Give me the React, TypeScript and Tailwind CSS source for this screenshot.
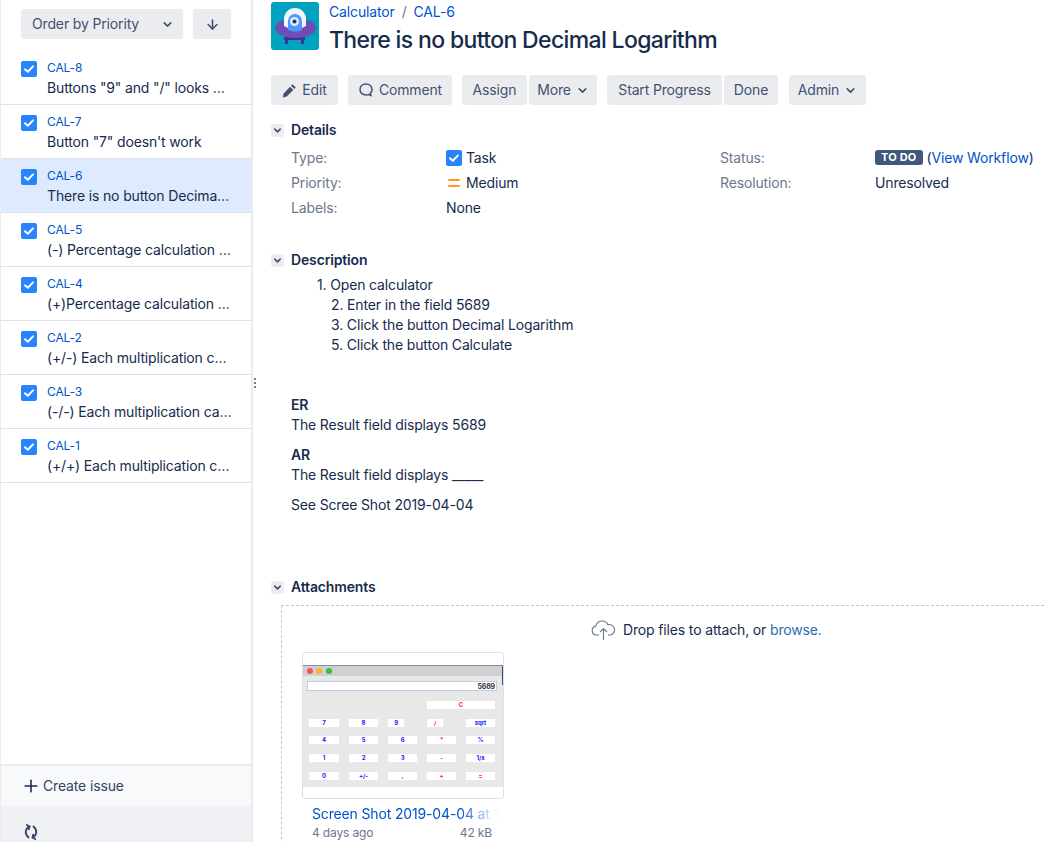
import { ArrowDown, ChevronDown, Plus } from "lucide-react";

const issues = [
  { key: "CAL-8", title: 'Buttons "9" and "/" looks different' },
  { key: "CAL-7", title: 'Button "7" doesn\'t work' },
  { key: "CAL-6", title: "There is no button Decimal Logarithm", active: true },
  { key: "CAL-5", title: "(-) Percentage calculation for numbers" },
  { key: "CAL-4", title: "(+)Percentage calculation for numbers" },
  { key: "CAL-2", title: "(+/-) Each multiplication calculates" },
  { key: "CAL-3", title: "(-/-) Each multiplication calculates" },
  { key: "CAL-1", title: "(+/+) Each multiplication calculates" },
];

function TaskIcon() {
  return (
    <svg width="16" height="16" viewBox="0 0 16 16" className="shrink-0">
      <rect width="16" height="16" rx="2" fill="#2684ff" />
      <path d="M4 8.2l2.8 2.6L12 5.4" fill="none" stroke="#fff" strokeWidth="2" strokeLinecap="round" strokeLinejoin="round" />
    </svg>
  );
}

function Toolbar({ className, children }: { className?: string; children: React.ReactNode }) {
  return (
    <button className={`h-[30px] flex items-center justify-center gap-[5px] rounded-[3px] bg-[#ebecf0] text-[#42526e] text-sm ${className ?? ""}`}>
      {children}
    </button>
  );
}

function SectionHead({ title }: { title: string }) {
  return (
    <div className="flex items-center gap-[7px] h-5">
      <span className="w-[13px] h-[13px] rounded-[3px] bg-[#ebecf0] flex items-center justify-center">
        <ChevronDown size={11} strokeWidth={3.5} className="text-[#42526e]" />
      </span>
      <h4 className="text-sm font-semibold text-[#172b4d]">{title}</h4>
    </div>
  );
}

function Calculator() {
  const rows = [
    { y: 54, labels: ["7", "8", "9", "/", "sqrt"] },
    { y: 71, labels: ["4", "5", "6", "*", "%"] },
    { y: 89, labels: ["1", "2", "3", "-", "1/x"] },
    { y: 107, labels: ["0", "+/-", ",", "+", "="] },
  ];
  const cols = [
    { x: 6, w: 30 },
    { x: 46, w: 29 },
    { x: 85, w: 29 },
    { x: 124, w: 29 },
    { x: 163, w: 29 },
  ];
  return (
    <svg width="200" height="122" viewBox="0 0 200 122" className="block">
      <rect width="200" height="122" fill="#e8e8e8" />
      <rect width="200" height="11" fill="#d0d0d0" />
      <rect x="199" width="1" height="20" fill="#2c4f86" />
      <rect width="200" height="1" fill="#7f8fae" />
      <circle cx="7" cy="6" r="3" fill="#f9564f" />
      <circle cx="16" cy="6" r="3" fill="#f8b431" />
      <circle cx="26" cy="6" r="3" fill="#2fc13f" />
      <rect x="4.5" y="16.5" width="189" height="9" fill="#fff" stroke="#b7cfe9" />
      <text x="192" y="24" fontSize="7" fontWeight="700" textAnchor="end" fill="#333">5689</text>
      <rect x="124" y="36" width="68" height="8" fill="#fff" />
      <text x="158" y="42" fontSize="6" fontWeight="700" textAnchor="middle" fill="#f22">C</text>
      {rows.map((row, r) =>
        row.labels.map((label, c) => {
          const narrow = r === 0 && (c === 2 || c === 3);
          const w = narrow ? 16 : cols[c].w;
          return (
            <g key={label}>
              <rect x={cols[c].x} y={row.y} width={w} height="8" fill="#fff" />
              <text x={cols[c].x + w / 2} y={row.y + 6} fontSize="6" fontWeight="700" textAnchor="middle" fill={c === 3 || label === "=" ? "#f22" : "#22f"}>
                {label}
              </text>
            </g>
          );
        })
      )}
    </svg>
  );
}

export default function App() {
  return (
    <div className="h-[842px] w-[1044px] overflow-hidden flex bg-white text-sm tracking-[-0.15px] text-[#172b4d] font-['Inter',sans-serif] relative">
      <aside className="w-[253px] h-full shrink-0 flex flex-col border-l border-r-2 border-[#ebecf0]">
        <div className="flex gap-[10px] pl-5 pt-[9px] h-[51px]">
          <div className="w-[162px] h-[30px] rounded-[3px] bg-[#ebecf0] flex items-center justify-between pl-[11px] pr-[9px] text-[#42526e]">
            <span>Order by Priority</span>
            <ChevronDown size={13} strokeWidth={3} />
          </div>
          <div className="w-[38px] h-[30px] rounded-[3px] bg-[#ebecf0] flex items-center justify-center text-[#42526e]">
            <ArrowDown size={15} strokeWidth={2.5} />
          </div>
        </div>
        <ul className="flex-1">
          {issues.map((issue) => (
            <li
              key={issue.key}
              className={`h-[54px] flex gap-[10px] pl-5 pr-[19px] pt-[8px] border-b border-[#dfe1e6] ${issue.active ? "bg-[#deebff]" : ""}`}
            >
              <span className="pt-[2px]"><TaskIcon /></span>
              <div className="min-w-0 flex-1">
                <div className="text-xs leading-[18px] text-[#0052cc]">{issue.key}</div>
                <div className="truncate leading-5 mt-[1px]">{issue.title}</div>
              </div>
            </li>
          ))}
        </ul>
        <div className="h-[42px] border-t-2 border-[#ebecf0] bg-[#f8f9fb] flex items-center gap-[2px] pl-[20px] text-[#344563]">
          <Plus size={20} strokeWidth={1.9} className="text-[#172b4d]" />
          <span>Create issue</span>
        </div>
        <div className="h-[36px] bg-[#f0f1f5] pl-[22px] pt-[18px]">
          <svg width="16" height="16" viewBox="0 0 16 16" fill="none" stroke="#344563" strokeWidth="1.8" strokeLinecap="round" strokeLinejoin="round">
            <path d="M6.500 2.500C2.500 4 1 9.500 5.500 13.500" />
            <path d="M3.800 1L6.500 2.500L5.800 5.300" />
            <path d="M9.500 13.500C13.500 12 15 6.500 10.500 2.500" />
            <path d="M12.200 15L9.500 13.500L10.200 10.700" />
          </svg>
        </div>
      </aside>

      <div className="absolute left-[254px] top-[378px] flex flex-col gap-[2px]">
        <span className="w-[2px] h-[2px] rounded-full bg-[#42526e]" />
        <span className="w-[2px] h-[2px] rounded-full bg-[#42526e]" />
        <span className="w-[2px] h-[2px] rounded-full bg-[#42526e]" />
      </div>

      <main className="flex-1 min-w-0 pl-[18px] pt-[2px]">
        <header className="flex gap-[10px] h-[48px]">
          <svg width="48" height="48" viewBox="0 0 48 48" className="shrink-0">
            <rect width="48" height="48" rx="3" fill="#00a3bf" />
            <path d="M13 35h21v3h-1v4h-3v-4H17v4h-3v-4h-1z" fill="#403294" />
            <ellipse cx="24.500" cy="26" rx="20.500" ry="10" fill="#6f4db8" />
            <path d="M13 24V17a11 11 0 0 1 22 0v7q-11 7-22 0z" fill="#f4f5f7" />
            <path d="M17 28V19a7 7 0 0 1 14 0v9q-7 3-14 0z" fill="#4c9aff" />
            <circle cx="23.500" cy="19.500" r="4.500" fill="#deebff" />
            <circle cx="23.500" cy="19.500" r="2" fill="#253858" />
          </svg>
          <div>
            <div className="flex items-center h-5 text-[#0052cc]">
              <span>Calculator</span>
              <span className="text-[#6b778c] mx-[7px]">/</span>
              <span>CAL-6</span>
            </div>
            <h1 className="text-[23px] leading-[30px] mt-[3px] font-medium tracking-[-0.028em]">There is no button Decimal Logarithm</h1>
          </div>
        </header>

        <div className="flex mt-[25px]">
          <Toolbar className="w-[67px]">
            <svg width="15" height="15" viewBox="0 0 15 15" fill="#42526e">
              <path d="M10.500 1.200l3.300 3.300-1.500 1.500-3.300-3.300zM8 3.700l3.300 3.300-6.600 6.600-4 1 1-4z" />
            </svg>
            Edit
          </Toolbar>
          <Toolbar className="w-[104px] ml-[10px]">
            <svg width="16" height="16" viewBox="0 0 16 16" fill="none" stroke="#42526e" strokeWidth="1.500">
              <path d="M8 2c3.600 0 6 2.400 6 5.500 0 1.700-.7 3-1.700 3.900l.7 2.100-2.400-.9c-.8.300-1.700.4-2.600.4-3.600 0-6-2.400-6-5.500S4.400 2 8 2z" />
            </svg>
            Comment
          </Toolbar>
          <Toolbar className="w-[65px] ml-[10px]">Assign</Toolbar>
          <Toolbar className="w-[68px] ml-[2px]">
            More <ChevronDown size={13} strokeWidth={3} />
          </Toolbar>
          <Toolbar className="w-[115px] ml-[10px]">Start Progress</Toolbar>
          <Toolbar className="w-[54px] ml-[2px]">Done</Toolbar>
          <Toolbar className="w-[77px] ml-[11px]">
            Admin <ChevronDown size={13} strokeWidth={3} />
          </Toolbar>
        </div>

        <section className="mt-[15px]">
          <SectionHead title="Details" />
          <div className="grid grid-cols-[155px_274px_155px_1fr] pl-5 mt-[5px] auto-rows-[25px] items-center">
            <span className="text-[#6b778c]">Type:</span>
            <span className="flex items-center gap-1"><TaskIcon />Task</span>
            <span className="text-[#6b778c]">Status:</span>
            <span className="flex items-center gap-1 whitespace-nowrap">
              <span className="h-[15px] px-[6px] rounded-[3px] bg-[#42587a] text-white text-[11px] leading-[15px] font-bold tracking-[0.2px]">TO DO</span>
              <span>(<span className="text-[#0052cc]">View Workflow</span>)</span>
            </span>
            <span className="text-[#6b778c]">Priority:</span>
            <span className="flex items-center gap-1">
              <svg width="16" height="16" viewBox="0 0 16 16" className="shrink-0">
                <rect x="2" y="4" width="12" height="2" rx="1" fill="#ff991f" />
                <rect x="2" y="10" width="12" height="2" rx="1" fill="#ff991f" />
              </svg>
              Medium
            </span>
            <span className="text-[#6b778c]">Resolution:</span>
            <span>Unresolved</span>
            <span className="text-[#6b778c]">Labels:</span>
            <span>None</span>
          </div>
        </section>

        <section className="mt-[30px]">
          <SectionHead title="Description" />
          <div className="pl-5 mt-[5px] leading-5">
            <div className="pl-[26px]">1. Open calculator</div>
            <div className="pl-10">2. Enter in the field 5689</div>
            <div className="pl-10">3. Click the button Decimal Logarithm</div>
            <div className="pl-10">5. Click the button Calculate</div>
            <div className="font-semibold mt-[40px]">ER</div>
            <div>The Result field displays 5689</div>
            <div className="font-semibold mt-[10px]">AR</div>
            <div>The Result field displays _____</div>
            <div className="mt-[10px]">See Scree Shot 2019-04-04</div>
          </div>
        </section>

        <section className="mt-[62px]">
          <SectionHead title="Attachments" />
          <div className="ml-[10px] mt-[8px] border-t border-l border-dashed border-[#c1c7d0] h-[300px] pl-[20px]">
            <div className="flex items-center gap-[7px] h-[46px] pt-[2px] -ml-[20px] pl-[309px]">
              <svg width="25" height="22" viewBox="0 0 25 22" fill="none" stroke="#6b778c" strokeWidth="1.100">
                <path d="M8 16H5.500A4.500 4.500 0 0 1 4.800 7.100 6.500 6.500 0 0 1 17 5.700 5.300 5.300 0 0 1 19.500 16H17" />
                <path d="M12.500 21V10M9 13l3.500-3.500L16 13" />
              </svg>
              <span>Drop files to attach, or <span className="text-[#2a6ead]">browse.</span></span>
            </div>
            <div className="w-[202px]">
              <div className="h-[147px] border border-[#dfe1e6] rounded-[3px] pt-[12px] bg-white">
                <Calculator />
              </div>
              <div className="pl-[10px] pr-[10px] mt-[5px] leading-5 whitespace-nowrap overflow-hidden text-[#0052cc] [mask-image:linear-gradient(to_right,black_78%,transparent_97%)]">
                Screen Shot 2019-04-04 at 12.13.01
              </div>
              <div className="flex justify-between pl-[10px] pr-[12px] text-xs leading-4 mt-[1px] text-[#6b778c]">
                <span>4 days ago</span>
                <span>42 kB</span>
              </div>
            </div>
          </div>
        </section>
      </main>
    </div>
  );
}
